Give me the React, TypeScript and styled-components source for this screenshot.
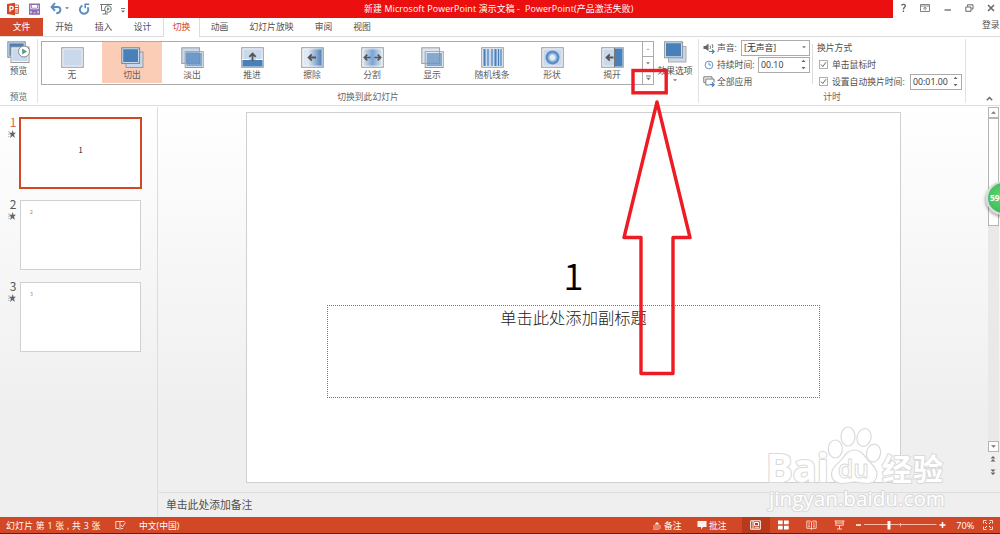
import type { ReactNode } from 'react';
import styled, { createGlobalStyle, css } from 'styled-components';

const colors = {
  accent: '#d24726',
  title: '#eb0f0f',
  blue: '#4a80ba',
  pale: '#c9d8ea',
  line: '#dcdcdc',
  border: '#ababab',
  text: '#4f4f4f',
  mark: '#ed1c24',
};

const GlobalStyle = createGlobalStyle`
  * { box-sizing: border-box; }
  body {
    margin: 0;
    overflow: hidden;
    font-family: 'Open Sans', 'Noto Sans CJK SC', sans-serif;
    font-size: 8.8px;
    color: ${colors.text};
  }
  svg { display: block; flex: none; }
`;

const Window = styled.div`
  position: relative;
  width: 1000px;
  height: 534px;
  display: flex;
  flex-direction: column;
  overflow: hidden;
  background: white;
  white-space: nowrap;
`;

const TitleBar = styled.header`
  display: flex;
  height: 18px;
`;

const QuickAccess = styled.div`
  width: 128px;
  padding: 0 0 1px 7px;
  display: flex;
  align-items: center;
`;

const TitleText = styled.div`
  width: 765px;
  padding-left: 236px;
  line-height: 18px;
  font-size: 8.9px;
  letter-spacing: 0.13px;
  color: white;
  white-space: pre;
  background: ${colors.title};
`;

const WindowButtons = styled.div`
  flex: 1;
  padding: 0 5px 2px 7px;
  display: flex;
  align-items: center;
  justify-content: space-between;
`;

const TabBar = styled.nav`
  display: flex;
  height: 19px;
  border-bottom: 1px solid ${colors.line};
`;

const FileTab = styled.div`
  width: 43px;
  height: 18px;
  line-height: 18px;
  text-align: center;
  color: white;
  background: ${colors.accent};
`;

const Tab = styled.div<{ $width: number; $active?: boolean }>`
  width: ${(p) => p.$width}px;
  height: 18px;
  line-height: 18px;
  text-align: center;
  ${(p) =>
    p.$active &&
    css`
      height: 19px;
      color: ${colors.accent};
      background: white;
      border: solid ${colors.line};
      border-width: 0 1px;
    `}
`;

const Login = styled.div`
  margin-left: auto;
  width: 18px;
  line-height: 14px;
`;

const Ribbon = styled.section`
  display: flex;
  height: 69px;
  padding-top: 2px;
  border-bottom: 1px solid ${colors.line};
`;

const Group = styled.div<{ $width: number }>`
  width: ${(p) => p.$width}px;
  height: 64px;
  display: flex;
  flex-direction: column;
  justify-content: space-between;
  border-right: 1px solid #e2e2e2;
`;

const GroupLabel = styled.div`
  text-align: center;
  line-height: 11px;
  color: #666;
`;

const BigButton = styled.div<{ $width: number }>`
  width: ${(p) => p.$width}px;
  padding-top: 2px;
  display: flex;
  flex-direction: column;
  align-items: center;
  line-height: 15px;
`;

const GroupBody = styled.div`
  display: flex;
  padding-left: 3px;
`;

const Gallery = styled.div`
  display: flex;
  margin-top: 2px;
  width: 613px;
  height: 44px;
  border: 1px solid ${colors.border};
`;

const GalleryItem = styled.div<{ $active?: boolean }>`
  width: 60px;
  height: 41px;
  padding-top: 5px;
  display: flex;
  flex-direction: column;
  align-items: center;
  line-height: 12px;
  color: #606060;
  background: ${(p) => (p.$active ? '#fccdb6' : 'transparent')};
`;

const GalleryScroll = styled.div`
  margin-left: auto;
  width: 11px;
  display: grid;
  grid-template-rows: 14px 14px 14px;
  border-left: 1px solid ${colors.border};
`;

const ScrollCell = styled.div`
  display: grid;
  place-items: center;
  & + & {
    border-top: 1px solid ${colors.border};
  }
`;

const TimingBody = styled.div`
  display: flex;
  height: 51px;
`;

const TimingColumn = styled.div<{ $width: number }>`
  width: ${(p) => p.$width}px;
  padding-left: 4px;
`;

const TimingRow = styled.div`
  display: flex;
  align-items: center;
  height: 17px;
`;

const RowIcon = styled.span`
  width: 14px;
`;

const Field = styled.div<{ $width: number }>`
  margin-left: auto;
  width: ${(p) => p.$width}px;
  height: 16px;
  padding: 0 3px 0 2px;
  display: flex;
  align-items: center;
  justify-content: space-between;
  color: #333;
  border: 1px solid ${colors.border};
`;

const Divider = styled.i`
  width: 1px;
  height: 40px;
  margin: 5px 0 0 2px;
  background: ${colors.line};
`;

const CheckBox = styled.span`
  width: 9px;
  height: 9px;
  margin: 0 4px 0 2px;
  display: grid;
  place-items: center;
  border: 1px solid #b0b0b0;
`;

const RibbonEnd = styled.div`
  flex: 1;
  display: flex;
  align-items: flex-end;
  justify-content: flex-end;
  padding: 0 7px 4px 0;
`;

const Workspace = styled.main`
  display: flex;
  height: 411px;
  background: linear-gradient(#ffffff, #efefef 75%);
`;

const ThumbPane = styled.aside`
  width: 158px;
  height: 409px;
  margin-top: 1px;
  padding: 8px 0 0 7px;
  display: flex;
  flex-direction: column;
  border-right: 1px solid ${colors.line};
`;

const ThumbRow = styled.div`
  display: flex;
  height: 82px;
`;

const ThumbSide = styled.div<{ $active?: boolean }>`
  width: 12px;
  display: flex;
  flex-direction: column;
  align-items: center;
  font-family: 'Noto Sans CJK SC', sans-serif;
  font-size: 12px;
  line-height: 13px;
  color: ${(p) => (p.$active ? '#e0694f' : '#555')};
  svg {
    margin: 2px 3px 0 0;
  }
`;

const Thumb = styled.div<{ $active?: boolean }>`
  width: 121px;
  height: 70px;
  margin: 3px 0 0 1px;
  padding: 7px 0 0 9px;
  font-family: 'Noto Sans CJK SC', sans-serif;
  font-size: 5px;
  color: #888;
  background: white;
  border: 1px solid #d0d0d0;
  ${(p) =>
    p.$active &&
    css`
      width: 123px;
      height: 72px;
      margin: 2px 0 0;
      padding: 25px 0 0;
      text-align: center;
      font-size: 7.5px;
      line-height: 11px;
      color: #111;
      border: 2px solid ${colors.accent};
    `}
`;

const EditorPane = styled.div`
  width: 842px;
  display: flex;
  flex-direction: column;
`;

const Stage = styled.div`
  display: flex;
  justify-content: space-between;
  height: 386px;
  padding-left: 88px;
`;

const Slide = styled.div`
  width: 655px;
  height: 371px;
  margin-top: 6px;
  padding-top: 138px;
  display: flex;
  flex-direction: column;
  align-items: center;
  background: white;
  border: 1px solid #cfcfcf;
`;

const SlideTitle = styled.div`
  height: 54px;
  line-height: 47px;
  font-family: 'Noto Sans CJK SC', sans-serif;
  font-size: 37px;
  font-weight: 350;
  color: black;
`;

const Subtitle = styled.div`
  width: 493px;
  height: 93px;
  text-align: center;
  font-family: 'Noto Sans CJK SC', sans-serif;
  font-size: 16.3px;
  font-weight: 300;
  line-height: 23px;
  color: #222;
  border: 1px dotted #777;
`;

const ScrollBar = styled.div`
  width: 12px;
  height: 374px;
  margin-top: 1px;
  display: flex;
  flex-direction: column;
  align-items: flex-start;
`;

const ScrollButton = styled.div`
  width: 11px;
  height: 11px;
  display: grid;
  place-items: center;
  background: white;
  border: 1px solid #b5b5b5;
`;

const ScrollTrack = styled.div`
  width: 11px;
  height: 323px;
  background: #e9e9e9;
`;

const ScrollThumb = styled.div`
  height: 108px;
  background: white;
  border: 1px solid #b5b5b5;
`;

const SlideSteps = styled.div`
  display: flex;
  flex-direction: column;
  gap: 5px;
  padding: 3px 0 0 2px;
`;

const Notes = styled.div`
  height: 25px;
  margin-left: 1px;
  padding-left: 7px;
  font-size: 10.8px;
  line-height: 23px;
  border-top: 1px solid ${colors.line};
`;

const StatusBar = styled.footer`
  display: flex;
  align-items: center;
  height: 17px;
  color: white;
  background: ${colors.accent};
  border-bottom: 1px solid #6b1d0c;
`;

const StatusLeft = styled.div`
  display: flex;
  align-items: center;
  gap: 13px;
  width: 652px;
  padding-left: 6px;
`;

const SlideCount = styled.span`
  width: 96px;
  letter-spacing: 0.28px;
`;

const StatusItem = styled.div<{ $width: number }>`
  width: ${(p) => p.$width}px;
  display: flex;
  align-items: center;
  gap: 2px;
`;

const ViewButton = styled.div<{ $active?: boolean }>`
  width: 27.8px;
  height: 16px;
  display: grid;
  place-items: center;
  background: ${(p) => (p.$active ? '#b83a1b' : 'transparent')};
`;

const ZoomText = styled.span`
  width: 28.6px;
  padding-left: 2px;
  font-size: 9.2px;
`;

const Badge = styled.div`
  position: absolute;
  left: 986px;
  top: 181px;
  width: 34px;
  height: 34px;
  padding-left: 2px;
  font-size: 8.5px;
  font-weight: 700;
  line-height: 29px;
  color: white;
  background: radial-gradient(circle at 40% 45%, #5fd672, #2bad49);
  border: 2px solid #dcdcdc;
  border-radius: 50%;
  box-shadow: -1px 2px 3px rgba(0, 0, 0, 0.3);
`;

const Overlay = styled.svg`
  position: absolute;
  inset: 0;
  pointer-events: none;
`;

type IconProps = { w: number; h: number; children: ReactNode };

const Icon = ({ w, h, children }: IconProps) => (
  <svg width={w} height={h} viewBox={`0 0 ${w} ${h}`} fill="none">
    {children}
  </svg>
);

const Caret = ({ up, size = 5, color = '#777' }: { up?: boolean; size?: number; color?: string }) => (
  <svg width={size} height={size / 2 + 0.5} viewBox="0 0 6 3">
    <path d={up ? 'M0 3L3 0L6 3Z' : 'M0 0L3 3L6 0Z'} fill={color} />
  </svg>
);

const SpinArrows = () => (
  <Icon w={5} h={11}>
    <path d="M0.5 3L2.5 0.8L4.5 3ZM0.5 8L2.5 10.2L4.5 8Z" fill="#666" />
  </Icon>
);

const Star = () => (
  <Icon w={8} h={8}>
    <path d="M4.7 0L5.6 2.8H8L6 4.6L6.9 8L4.5 6L2 8L2.9 4.7L1 2.8H3.8Z" fill="#666" />
    <path d="M0 2h2M0 4.3h2M0 6.5h1.5" stroke="#999" strokeWidth="0.6" />
  </Icon>
);

const Frame = ({ fill = colors.pale }: { fill?: string }) => (
  <>
    <rect x="0.8" y="0.8" width="21.4" height="19.4" fill={fill} stroke="#a0a0a0" strokeWidth="1.2" />
    <rect x="1.9" y="1.9" width="19.2" height="17.2" stroke="white" strokeWidth="0.8" />
  </>
);

const transitions: { name: string; art: ReactNode }[] = [
  { name: '无', art: <Frame /> },
  {
    name: '切出',
    art: (
      <>
        <rect x="5" y="5" width="17" height="15.5" fill={colors.pale} stroke="#999" />
        <rect x="0.8" y="0.8" width="17.8" height="15.6" fill={colors.blue} stroke="#888" />
        <rect x="1.8" y="1.8" width="15.8" height="13.6" stroke="white" strokeWidth="0.7" />
      </>
    ),
  },
  {
    name: '淡出',
    art: (
      <>
        <rect x="0.8" y="0.8" width="17.8" height="15.6" fill={colors.pale} stroke="#999" />
        <rect x="4.2" y="4.7" width="18" height="15.8" fill="white" stroke="#999" />
        <rect x="5.3" y="5.8" width="15.9" height="13.6" fill="#86a9d0" />
        <path d="M5.3 5.8H18.6V16.4H5.3Z" fill="#6e9ac9" stroke="#6288b0" strokeWidth="0.6" />
      </>
    ),
  },
  {
    name: '推进',
    art: (
      <>
        <Frame />
        <path d="M1.5 13H21.5V19.5H1.5Z" fill={colors.blue} />
        <path d="M1 12.5H8M15 12.5H22" stroke="white" strokeWidth="1.2" />
        <path d="M11.5 14V7M8.3 9.8L11.5 6.6L14.7 9.8" stroke="#555" strokeWidth="1.8" />
      </>
    ),
  },
  {
    name: '擦除',
    art: (
      <>
        <Frame fill="url(#wipe)" />
        <path d="M15 10.5H8M10.8 7.4L7.6 10.5L10.8 13.6" stroke="#555" strokeWidth="1.8" />
      </>
    ),
  },
  {
    name: '分割',
    art: (
      <>
        <Frame fill="url(#split)" />
        <path d="M9.5 10.5H3.5M6.3 7.6L3.4 10.5L6.3 13.4M13.5 10.5H19.5M16.7 7.6L19.6 10.5L16.7 13.4" stroke="#555" strokeWidth="1.7" />
      </>
    ),
  },
  {
    name: '显示',
    art: (
      <>
        <rect x="0.8" y="0.8" width="17.8" height="15.6" fill="#dce6f2" stroke="#999" />
        <rect x="4.2" y="4.7" width="18" height="15.8" fill="white" stroke="#999" />
        <rect x="5.5" y="6" width="15.5" height="13.3" fill="#86a9d0" />
        <path d="M5 16.4h13.6V5" stroke="#7190b2" strokeWidth="0.8" />
      </>
    ),
  },
  {
    name: '随机线条',
    art: (
      <>
        <Frame />
        <path d="M3.5 2V19M14.5 2V19" stroke={colors.blue} strokeWidth="2" />
        <path d="M7 2V19M11 2V19M17.5 2V19M20 2V19" stroke={colors.blue} strokeWidth="1.2" />
      </>
    ),
  },
  {
    name: '形状',
    art: (
      <>
        <Frame />
        <circle cx="11.5" cy="10.5" r="7" fill="url(#shape)" />
      </>
    ),
  },
  {
    name: '揭开',
    art: (
      <>
        <Frame />
        <path d="M14 1.5H21.5V19.5H14Z" fill={colors.blue} />
        <path d="M13.5 1V20" stroke="#777" />
        <path d="M12.5 10.5H6M8.8 7.4L5.6 10.5L8.8 13.6" stroke="#555" strokeWidth="1.8" />
      </>
    ),
  },
];

const Gradients = () => (
  <svg width="0" height="0" style={{ position: 'absolute' }}>
    <defs>
      <linearGradient id="wipe">
        <stop offset="0.3" stopColor="#dfe8f3" />
        <stop offset="1" stopColor="#3f76b3" />
      </linearGradient>
      <linearGradient id="split">
        <stop offset="0" stopColor="#e4ecf5" />
        <stop offset="0.5" stopColor="#7ba4d1" />
        <stop offset="1" stopColor="#e4ecf5" />
      </linearGradient>
      <radialGradient id="shape">
        <stop offset="0.3" stopColor="#e4ecf5" />
        <stop offset="0.75" stopColor="#5b8ec5" />
        <stop offset="1" stopColor="#5b8ec5" />
      </radialGradient>
    </defs>
  </svg>
);

const Toolbar = () => (
  <QuickAccess>
    <Icon w={22} h={14}>
      <path d="M6 3H11.5V11.5H6Z" fill="#fff" stroke="#d9694d" />
      <path d="M8 5.5H11M8 8H11M8 10H11" stroke={colors.accent} />
      <path d="M0 2L8 0.8V13.2L0 12Z" fill={colors.accent} />
      <path d="M3 9.8V4.3H4.5A1.6 1.6 0 0 1 4.5 7.7H3" stroke="white" strokeWidth="1.3" />
    </Icon>
    <Icon w={21} h={14}>
      <path d="M0.7 2.2H10.3V12H0.7Z" stroke="#8f6bb5" strokeWidth="1.4" />
      <path d="M2.5 2V6.2H8.5V2" stroke="#8f6bb5" strokeWidth="0.8" />
      <path d="M1 7.3H10V9H1ZM2.5 9H8.5V12.5H6.500V10.500H4.500V12.500H2.500Z" fill="#8f6bb5" />
    </Icon>
    <Icon w={15} h={14}>
      <path d="M2 5H7.5C11.8 5 11.3 11.3 6.3 11.3" stroke="#5b8bc0" strokeWidth="2" />
      <path d="M5 1.2L1.6 5L5 8.7" stroke="#5b8bc0" strokeWidth="2" />
    </Icon>
    <Caret size={4} />
    <Icon w={24} h={14}>
      <path d="M13.500 3.600A4.200 4.200 0 1 0 18.600 5.200" stroke="#5b8bc0" strokeWidth="1.9" />
      <path d="M20.200 2.300H16.200V6.300" stroke="#5b8bc0" strokeWidth="1.6" />
    </Icon>
    <Icon w={24} h={14}>
      <path d="M7 2.5H19M8.5 3V8.5H12M12.5 8.5V12M9.5 12H15" stroke="#777" />
      <circle cx="15" cy="7" r="3.3" fill="white" stroke="#777" />
      <path d="M14 5.2L17 7L14 8.8Z" fill="#4c9c78" />
    </Icon>
    <Icon w={11} h={14}>
      <path d="M4 6.5H8" stroke="#777" />
      <path d="M4 8.5H8L6 10.8Z" fill="#777" />
    </Icon>
  </QuickAccess>
);

const tabs = [
  { label: '开始', width: 42 },
  { label: '插入', width: 37 },
  { label: '设计', width: 41 },
  { label: '切换', width: 37, active: true },
  { label: '动画', width: 39 },
  { label: '幻灯片放映', width: 65 },
  { label: '审阅', width: 39 },
  { label: '视图', width: 38 },
];

const PaneIcon = () => (
  <Icon w={24} h={23}>
    <rect x="0.8" y="0.8" width="17.5" height="15.5" fill={colors.blue} stroke="#999" />
    <rect x="1.9" y="1.9" width="15.3" height="13.3" stroke="white" strokeWidth="0.8" />
    <rect x="4" y="6" width="18" height="15.5" fill="white" stroke="#999" />
    <rect x="5.3" y="7.3" width="15.4" height="12.9" fill={colors.pale} />
    <circle cx="17" cy="10.5" r="5.5" fill="white" stroke="#888" />
    <path d="M15.2 7.5L20 10.5L15.2 13.5Z" fill="#4ba184" />
  </Icon>
);

const EffectIcon = () => (
  <Icon w={23} h={23}>
    <rect x="4.5" y="5.5" width="17.5" height="15.5" fill={colors.pale} stroke="#aaa" />
    <rect x="0.6" y="0.8" width="18" height="16" fill={colors.blue} stroke="#999" />
    <rect x="1.6" y="1.8" width="16" height="14" stroke="white" strokeWidth="0.7" />
  </Icon>
);

const Check = () => (
  <CheckBox>
    <Icon w={7} h={7}>
      <path d="M1 3.5L2.8 5.5L6 1.2" stroke="#666" />
    </Icon>
  </CheckBox>
);

const slides = [1, 2, 3];

const App = () => {
  return (
    <Window>
      <GlobalStyle />
      <Gradients />
      <TitleBar>
        <Toolbar />
        <TitleText>{'新建 Microsoft PowerPoint 演示文稿 -  PowerPoint(产品激活失败)'}</TitleText>
        <WindowButtons>
          <Icon w={7} h={10}>
            <path d="M1.5 2.5C2 0.8 5.5 1 5.2 3C5 4.6 3.4 4.5 3.4 6.5M3.4 7.5V9" stroke="#666" strokeWidth="1.4" />
          </Icon>
          <Icon w={10} h={8}>
            <path d="M0.5 0.5H9.5V7.5H0.5ZM0.5 2H9.5M5 6.5V3.5M3.3 4.8L5 3.2L6.7 4.8" stroke="#777" strokeWidth="0.9" />
          </Icon>
          <Icon w={8} h={8}>
            <path d="M0.500 6H7" stroke="#666" strokeWidth="1.3" />
          </Icon>
          <Icon w={9} h={8}>
            <path d="M2.5 2.5V0.8H8V5H6.5M0.8 3H6V7.3H0.8Z" stroke="#666" />
          </Icon>
          <Icon w={8} h={8}>
            <path d="M1 1L7 7M7 1L1 7" stroke="#666" strokeWidth="1.5" />
          </Icon>
        </WindowButtons>
      </TitleBar>
      <TabBar>
        <FileTab>文件</FileTab>
        {tabs.map((tab) => (
          <Tab key={tab.label} $width={tab.width} $active={tab.active}>
            {tab.label}
          </Tab>
        ))}
        <Login>登录</Login>
      </TabBar>
      <Ribbon>
        <Group $width={38}>
          <BigButton $width={37}>
            <PaneIcon />
            预览
          </BigButton>
          <GroupLabel>预览</GroupLabel>
        </Group>
        <Group $width={661}>
          <GroupBody>
            <Gallery>
              {transitions.map((item, index) => (
                <GalleryItem key={item.name} $active={index === 1}>
                  <Icon w={23} h={22}>
                    {item.art}
                  </Icon>
                  {item.name}
                </GalleryItem>
              ))}
              <GalleryScroll>
                <ScrollCell>
                  <Caret up size={4} color="#bbb" />
                </ScrollCell>
                <ScrollCell>
                  <Caret size={4} />
                </ScrollCell>
                <ScrollCell>
                  <Icon w={5} h={6}>
                    <path d="M0 1H5" stroke="#777" />
                    <path d="M0.2 2.7H4.8L2.5 5.2Z" fill="#777" />
                  </Icon>
                </ScrollCell>
              </GalleryScroll>
            </Gallery>
            <BigButton $width={42}>
              <EffectIcon />
              效果选项
              <Caret size={4} />
            </BigButton>
          </GroupBody>
          <GroupLabel>切换到此幻灯片</GroupLabel>
        </Group>
        <Group $width={267}>
          <TimingBody>
            <TimingColumn $width={111}>
              <TimingRow>
                <RowIcon>
                  <Icon w={12} h={12}>
                    <path d="M0.5 4H2.5L5.5 1.5V9L2.5 7H0.5Z" fill="#666" />
                    <path d="M7 3.5Q8 5 7 7M9 2Q10.5 4 9.5 6" stroke="#777" />
                    <path d="M6 9.5H11M9 7.3L11.2 9.5L9 11.7" stroke={colors.blue} strokeWidth="1.2" />
                  </Icon>
                </RowIcon>
                声音:
                <Field $width={69}>
                  [无声音]
                  <Caret size={4} />
                </Field>
              </TimingRow>
              <TimingRow>
                <RowIcon>
                  <Icon w={12} h={10}>
                    <circle cx="6" cy="5" r="3.9" stroke="#6b92bd" />
                    <path d="M6 2.5V5H8" stroke="#6b92bd" />
                  </Icon>
                </RowIcon>
                持续时间:
                <Field $width={52}>
                  00.10
                  <SpinArrows />
                </Field>
              </TimingRow>
              <TimingRow>
                <RowIcon>
                  <Icon w={12} h={11}>
                    <path d="M2 6.5H0.8V0.8H9V2.5M2.8 3H11V6.5M2.8 3V9H6" stroke="#777" />
                    <path d="M6.5 8.7H11M9 6.5L11.2 8.7L9 10.9" stroke={colors.blue} strokeWidth="1.2" />
                  </Icon>
                </RowIcon>
                全部应用
              </TimingRow>
            </TimingColumn>
            <Divider />
            <TimingColumn $width={149}>
              <TimingRow>换片方式</TimingRow>
              <TimingRow>
                <Check />
                单击鼠标时
              </TimingRow>
              <TimingRow>
                <Check />
                设置自动换片时间:
                <Field $width={52}>
                  00:01.00
                  <SpinArrows />
                </Field>
              </TimingRow>
            </TimingColumn>
          </TimingBody>
          <GroupLabel>计时</GroupLabel>
        </Group>
        <RibbonEnd>
          <Icon w={7} h={5}>
            <path d="M0.8 4.2L3.5 1.4L6.2 4.2" stroke="#666" strokeWidth="1.4" />
          </Icon>
        </RibbonEnd>
      </Ribbon>
      <Workspace>
        <ThumbPane>
          {slides.map((n) => (
            <ThumbRow key={n}>
              <ThumbSide $active={n === 1}>
                {n}
                <Star />
              </ThumbSide>
              <Thumb $active={n === 1}>{n}</Thumb>
            </ThumbRow>
          ))}
        </ThumbPane>
        <EditorPane>
          <Stage>
            <Slide>
              <SlideTitle>1</SlideTitle>
              <Subtitle>单击此处添加副标题</Subtitle>
            </Slide>
            <ScrollBar>
              <ScrollButton>
                <Caret up size={5} />
              </ScrollButton>
              <ScrollTrack>
                <ScrollThumb />
              </ScrollTrack>
              <ScrollButton>
                <Caret size={5} />
              </ScrollButton>
              <SlideSteps>
                <Icon w={6} h={8}>
                  <path d="M0.5 3.5L3 1L5.5 3.5ZM0.5 6.5L3 4L5.5 6.5Z" fill="#666" />
                </Icon>
                <Icon w={6} h={8}>
                  <path d="M0.5 1.5L3 4L5.5 1.5ZM0.5 4.5L3 7L5.5 4.5Z" fill="#666" />
                </Icon>
              </SlideSteps>
            </ScrollBar>
          </Stage>
          <Notes>单击此处添加备注</Notes>
        </EditorPane>
      </Workspace>
      <StatusBar>
        <StatusLeft>
          <SlideCount>幻灯片 第 1 张 , 共 3 张</SlideCount>
          <Icon w={11} h={10}>
            <path d="M5 8.5V1.5H0.8V8.5H4L5 9.5L6 8.5H8M5 1.5H9.5M6 5L7.5 6.8L10.5 2.5" stroke="#ffe9e2" strokeWidth="0.9" />
          </Icon>
          <span>中文(中国)</span>
        </StatusLeft>
        <StatusItem $width={45}>
          <Icon w={10} h={9}>
            <path d="M2.5 3.5L5 1L7.5 3.5Z" fill="white" />
            <path d="M1 5H9M1 7H9M1 8.8H7" stroke="#ffd9cd" strokeWidth="0.8" />
          </Icon>
          备注
        </StatusItem>
        <StatusItem $width={45}>
          <Icon w={10} h={10}>
            <path d="M0.5 1H9.5V7H6L4 9.5V7H0.5Z" fill="#fff3ef" />
          </Icon>
          批注
        </StatusItem>
        <ViewButton $active>
          <Icon w={11} h={10}>
            <path d="M0.7 0.8H10.3V9.2H0.7ZM3 1V9M4.5 7.8H9" stroke="white" />
            <path d="M4.5 2.5H8.5V5.8H4.5Z" stroke="white" />
          </Icon>
        </ViewButton>
        <ViewButton>
          <Icon w={11} h={10}>
            <path d="M0 0.5H4.7V4.3H0ZM6 0.5H10.7V4.3H6ZM0 5.8H4.7V9.6H0ZM6 5.8H10.7V9.6H6Z" fill="white" />
          </Icon>
        </ViewButton>
        <ViewButton>
          <Icon w={11} h={10}>
            <path d="M5.5 2V9.5M0.8 1H4.2L5.5 2L6.8 1H10.2V8.3H6.8L5.5 9.3L4.2 8.3H0.8ZM2.2 3H4M2.2 5H4M2.2 6.7H4M7 3H8.8M7 5H8.8M7 6.7H8.8" stroke="#ffdacf" strokeWidth="0.9" />
          </Icon>
        </ViewButton>
        <ViewButton>
          <Icon w={11} h={10}>
            <path d="M0.5 1H10.5M1.8 1V5.3H9.2V1M5.5 5.5V9M3 9H8M2 3H9" stroke="#ffe5dc" strokeWidth="0.9" />
          </Icon>
        </ViewButton>
        <Icon w={101} h={12}>
          <path d="M3 6H8M86.500 6H92.500M89.500 3V9" stroke="white" strokeWidth="1.5" />
          <path d="M11 5.5H83.5M47.5 4V7.5" stroke="#f6b9a8" />
          <path d="M34.5 2H37.5V10.5H34.5Z" fill="white" />
        </Icon>
        <ZoomText>70%</ZoomText>
        <Icon w={10} h={10}>
          <path d="M0.500 3.500V0.500H3.500M6.500 0.500H9.500V3.500M9.500 6.500V9.500H6.500M3.500 9.500H0.500V6.500" stroke="#ffd5c9" />
          <path d="M2 2L4 4M8 2L6 4M2 8L4 6M8 8L6 6" stroke="white" />
        </Icon>
      </StatusBar>
      <Badge>59</Badge>
      <Overlay width="1000" height="534" fill="none">
        {/* watermark logo */}
        <g fill="white" stroke="#dadada" strokeWidth="1.2" strokeLinejoin="round">
          <g fontFamily="'Open Sans', sans-serif" paintOrder="stroke" strokeWidth="2.2">
            <text x="766" y="482" fontSize="39" fontWeight="700" textLength="63" lengthAdjust="spacingAndGlyphs">
              Bai
            </text>
            <text x="882" y="479.500" fontFamily="'Noto Sans CJK SC', sans-serif" fontSize="30" fontWeight="700" textLength="61">
              经验
            </text>
            <text x="769" y="506" fontSize="20" textLength="176" lengthAdjust="spacingAndGlyphs">
              jingyan.baidu.com
            </text>
          </g>
          <ellipse cx="835.300" cy="449" rx="7" ry="9" />
          <ellipse cx="848" cy="436.500" rx="7" ry="9.500" />
          <ellipse cx="864" cy="437.500" rx="7" ry="9" transform="rotate(14 864 437.500)" />
          <ellipse cx="873.500" cy="453" rx="7" ry="9" transform="rotate(10 873.500 453)" />
          <path d="M854.500 450C848 450 845 455 842 459C838 464 831.500 467 831.500 474C831.500 480 836 483.500 842 483.500C847 483.500 850 482 854.500 482C859 482 862 483.500 867 483.500C873 483.500 877 480 877 474C877 467 871 464 867 459C864 455 861 450 854.500 450Z" />
          <text x="838" y="478" fontFamily="'Open Sans', sans-serif" fontSize="25" fontWeight="600" strokeWidth="1" textLength="31" lengthAdjust="spacingAndGlyphs">
            du
          </text>
        </g>
        {/* callout around the gallery "more" button */}
        <rect x="633" y="70.500" width="33.200" height="22.300" stroke={colors.mark} strokeWidth="3.400" />
        <path
          d="M657 102L690 237.500H673V373.500H641V237.500H624Z"
          stroke={colors.mark}
          strokeWidth="3.400"
          strokeLinejoin="round"
        />
      </Overlay>
    </Window>
  );
};

export default App;
